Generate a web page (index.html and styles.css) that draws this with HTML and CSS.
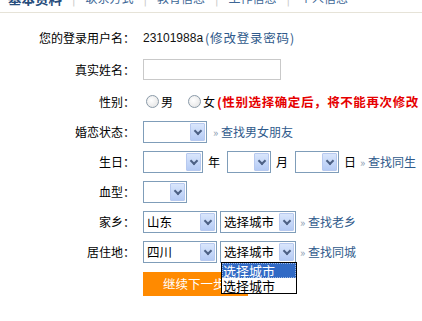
FILE: index.html
```html
<!DOCTYPE html>
<html>
<head>
<meta charset="utf-8">
<link rel="stylesheet" href="styles.css">
</head>
<body>
<div class="tabs">
  <span class="tab active">基本资料</span><span class="sep">|</span>
  <span class="tab">联系方式</span><span class="sep">|</span>
  <span class="tab">教育信息</span><span class="sep">|</span>
  <span class="tab">工作信息</span><span class="sep">|</span>
  <span class="tab">个人信息</span>
</div>
<div class="form">
  <div class="row r1">
    <div class="label">您的登录用户名：</div>
    <div class="value"><span class="uname">23101988a</span> <a class="link pw">(修改登录密码)</a></div>
  </div>
  <div class="row r2">
    <div class="label">真实姓名：</div>
    <div class="value"><span class="input"></span></div>
  </div>
  <div class="row r3">
    <div class="label">性别：</div>
    <div class="value">
      <span class="radio"></span><span class="rlabel">男</span>
      <span class="radio r-second"></span><span class="rlabel">女</span>
      <span class="warn">(性别选择确定后，将不能再次修改</span>
    </div>
  </div>
  <div class="row">
    <div class="label">婚恋状态：</div>
    <div class="value">
      <span class="select w63"><span class="txt"></span><span class="btn"></span></span>
      <span class="find"><span class="raq">»</span> <a class="link">查找男女朋友</a></span>
    </div>
  </div>
  <div class="row">
    <div class="label">生日：</div>
    <div class="value">
      <span class="select w59"><span class="txt"></span><span class="btn"></span></span>
      <span class="unit">年</span>
      <span class="select w43"><span class="txt"></span><span class="btn"></span></span>
      <span class="unit">月</span>
      <span class="select w43"><span class="txt"></span><span class="btn"></span></span>
      <span class="unit last">日</span>
      <span class="find f-bd"><span class="raq">»</span> <a class="link">查找同生</a></span>
    </div>
  </div>
  <div class="row">
    <div class="label">血型：</div>
    <div class="value">
      <span class="select w43"><span class="txt"></span><span class="btn"></span></span>
    </div>
  </div>
  <div class="row">
    <div class="label">家乡：</div>
    <div class="value">
      <span class="select w74"><span class="txt">山东</span><span class="btn"></span></span>
      <span class="select w75 city"><span class="txt">选择城市</span><span class="btn"></span></span>
      <span class="find f-city"><span class="raq">»</span> <a class="link">查找老乡</a></span>
    </div>
  </div>
  <div class="row">
    <div class="label">居住地：</div>
    <div class="value">
      <span class="select w74"><span class="txt">四川</span><span class="btn"></span></span>
      <span class="select w75 city open"><span class="txt">选择城市</span><span class="btn"></span>
        <span class="list">
          <span class="opt sel">选择城市</span>
          <span class="opt">选择城市</span>
        </span>
      </span>
      <span class="find f-city"><span class="raq">»</span> <a class="link">查找同城</a></span>
    </div>
  </div>
  <div class="row rbtn">
    <div class="label"></div>
    <div class="value">
      <span class="submit">继续下一步</span><span class="submit2"></span>
    </div>
  </div>
</div>
</body>
</html>
```
FILE: styles.css
```css
html, body {
  margin: 0;
  padding: 0;
  background: #fff;
  overflow: hidden;
  width: 422px;
  height: 321px;
}
body {
  font-family: "Noto Sans CJK SC", "DejaVu Sans", sans-serif;
  font-size: 12px;
  color: #000;
}
.tabs {
  height: 12px;
  border-bottom: 1px solid #e6e3d8;
  overflow: hidden;
  display: flex;
  align-items: flex-end;
  padding-left: 8px;
  white-space: nowrap;
}
.tab {
  font-size: 12px;
  line-height: 16px;
  color: #3d6796;
  transform: translateY(-6px);
}
.tab.active {
  font-size: 13.5px;
  font-weight: bold;
  color: #274d7c;
}
.sep {
  color: #c8c8c8;
  font-size: 13px;
  line-height: 16px;
  margin: 0 10px;
  transform: translateY(-6px);
}
.form {
  padding-top: 10px;
}
.row {
  display: flex;
  align-items: center;
  height: 30px;
  white-space: nowrap;
}
.row.r1 { height: 30px; }
.row.r2 { height: 33px; }
.row.r3 { height: 31px; }
.label {
  width: 135px;
  flex: none;
  text-align: right;
  line-height: 16px;
}
.value {
  margin-left: 8px;
  display: flex;
  align-items: center;
  line-height: 16px;
}
.uname {
  font-family: "Liberation Sans", "DejaVu Sans", sans-serif;
  font-size: 12px;
  color: #111;
  margin-right: 2px;
}
.link {
  color: #2f5a8b;
  text-decoration: none;
}
.link.pw {
  font-size: 12.5px;
  letter-spacing: 0.8px;
}
.input {
  display: block;
  width: 136px;
  height: 19px;
  border: 1px solid #c9c9c9;
  background: #fff;
}
.radio {
  width: 11px;
  height: 11px;
  border: 1px solid #8a9aa8;
  border-radius: 50%;
  background: radial-gradient(circle at 40% 40%, #fff 0%, #e6e6e6 80%);
  margin-left: 3px;
  margin-right: 2px;
}
.r-second { margin-left: 13px; }
.rlabel { margin-right: 2px; }
.warn {
  color: #e60000;
  font-weight: bold;
  font-size: 12.5px;
  letter-spacing: 0.6px;
  margin-left: 0;
}
.select {
  position: relative;
  display: flex;
  align-items: stretch;
  height: 18px;
  border: 1px solid #7f9db9;
  background: #fff;
  padding: 1px;
  box-sizing: content-box;
}
.select .txt {
  flex: 1;
  padding-left: 2px;
  line-height: 18px;
  font-size: 12.5px;
}
.select .btn {
  width: 15px;
  flex: none;
  background: linear-gradient(#d9e6fc, #b5cbf5);
  border: 1px solid #b7c9ef;
  box-sizing: border-box;
  border-radius: 1px;
  position: relative;
}
.select .btn::after {
  content: "";
  position: absolute;
  left: 4px;
  top: 4px;
  width: 4px;
  height: 4px;
  border-right: 2px solid #4d6185;
  border-bottom: 2px solid #4d6185;
  transform: rotate(45deg);
}
.w63 { width: 60px; }
.w59 { width: 56px; }
.w43 { width: 40px; }
.w74 { width: 70px; }
.w75 { width: 72px; }
.city { margin-left: 3px; }
.unit { margin: 0 7px 0 5px; }
.unit.last { margin-right: 0; }
.find { margin-left: 6px; }
.f-bd { margin-left: 4px; }
.f-city { margin-left: 4px; }
.raq {
  color: #8a9bb0;
  font-size: 11px;
}
.list {
  position: absolute;
  left: 0;
  top: 20px;
  width: 74px;
  border: 1px solid #000;
  background: #fff;
  display: flex;
  flex-direction: column;
  z-index: 5;
}
.opt {
  height: 15px;
  line-height: 15px;
  font-size: 13px;
  padding-left: 1px;
}
.opt.sel {
  background: #316ac5;
  color: #fff;
  outline: 1px dotted #a0b8e0;
  outline-offset: -1px;
}
.rbtn { height: 24px; margin-top: 5px; align-items: flex-start; }
.submit {
  display: block;
  width: 105px;
  height: 24px;
  line-height: 24px;
  background: #ff8a00;
  color: #fff;
  font-size: 12.5px;
  padding-left: 20px;
  box-sizing: border-box;
}
.submit2 {
  display: block;
  width: 45px;
  height: 20px;
  margin-left: 4px;
  background: #ff8a00;
}
```
